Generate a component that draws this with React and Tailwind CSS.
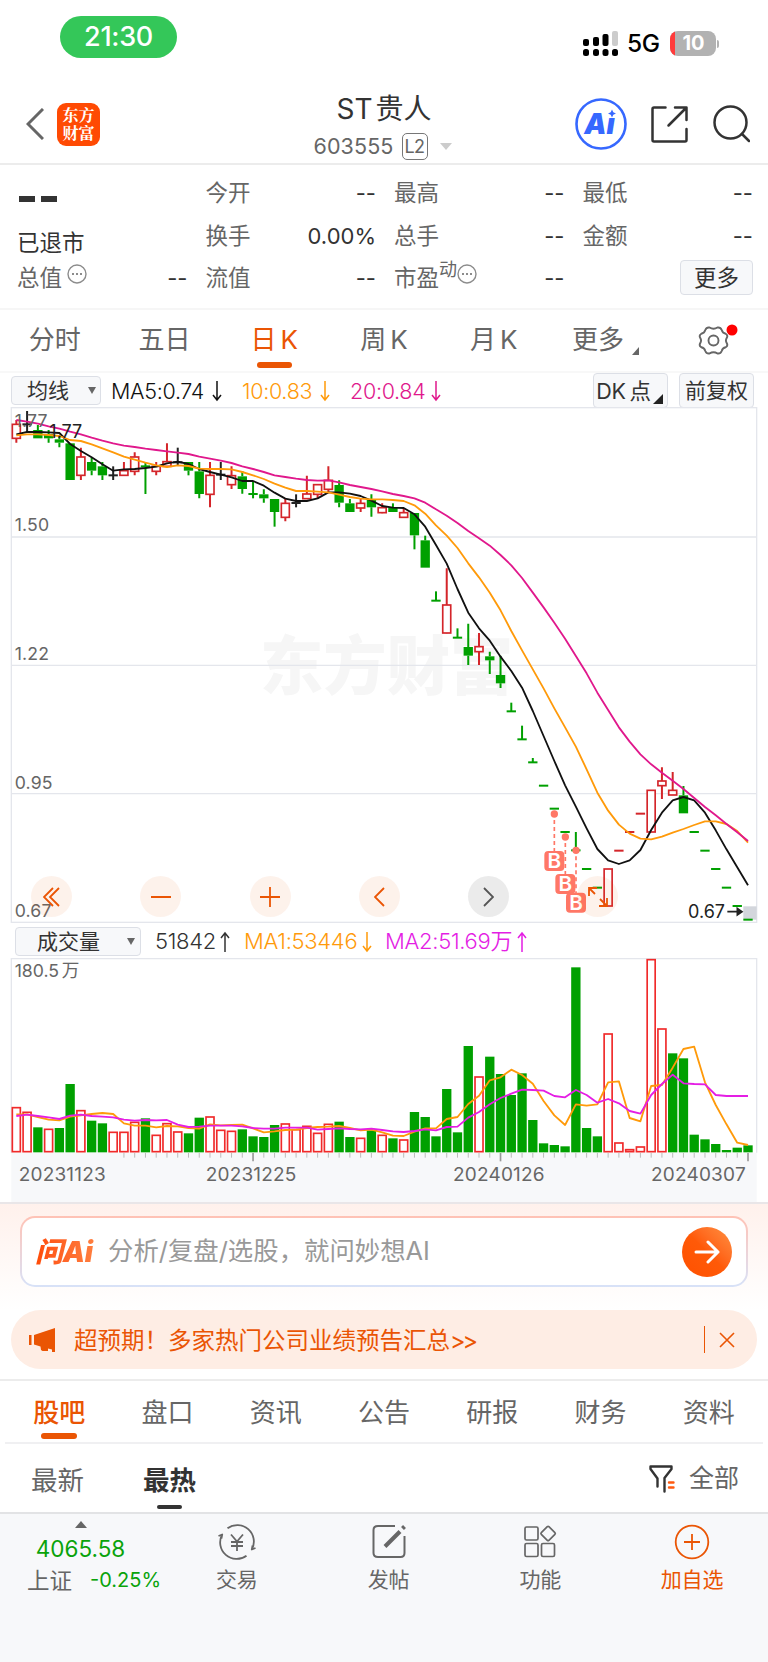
import React from "react";

// chart units are a third of a pixel, first value is the candle type:
// g = falling, r = rising, k = unchanged, then high, low, body top, body bottom
const candles = [
  ["r", 60, 128, 73, 115], ["k", 33, 97, 73, 73], ["g", 75, 115, 90, 115],
  ["g", 90, 128, 102, 115], ["g", 110, 142, 118, 128], ["g", 130, 240, 130, 240],
  ["r", 143, 240, 171, 226], ["g", 172, 226, 186, 212], ["g", 186, 240, 199, 226],
  ["k", 199, 240, 226, 226], ["r", 186, 228, 212, 226], ["r", 157, 226, 171, 214],
  ["g", 186, 282, 199, 199], ["r", 186, 226, 199, 214], ["r", 130, 200, 185, 199],
  ["k", 143, 195, 187, 187], ["g", 186, 226, 186, 212], ["g", 186, 295, 214, 282],
  ["r", 186, 322, 226, 283], ["k", 186, 240, 224, 224], ["r", 199, 267, 227, 254],
  ["g", 213, 281, 229, 267], ["g", 243, 295, 282, 282], ["g", 268, 308, 283, 295],
  ["g", 297, 380, 297, 336], ["r", 297, 364, 310, 352], ["k", 283, 322, 309, 309],
  ["r", 227, 297, 282, 296], ["r", 254, 295, 254, 283], ["r", 199, 280, 241, 268],
  ["g", 241, 322, 255, 308], ["g", 297, 336, 310, 336], ["r", 297, 336, 310, 324],
  ["g", 283, 350, 297, 322], ["r", 310, 340, 323, 338], ["g", 310, 336, 323, 336],
  ["r", 325, 354, 338, 352], ["g", 339, 448, 339, 406], ["g", 407, 503, 421, 503],
  ["g", 574, 602, 602, 602], ["r", 505, 700, 615, 699], ["g", 685, 713, 713, 713],
  ["g", 671, 795, 741, 767], ["r", 699, 795, 740, 755], ["g", 755, 822, 769, 781],
  ["g", 767, 864, 825, 850], ["g", 908, 934, 934, 934], ["g", 977, 1018, 1018, 1018],
  ["g", 1074, 1087, 1087, 1087], ["g", 1157, 1157, 1157, 1157], ["g", 1226, 1226, 1226, 1226],
  ["g", 1296, 1296, 1296, 1296], ["g", 1296, 1351, 1351, 1351], ["g", 1407, 1407, 1407, 1407],
  ["g", 1463, 1463, 1463, 1463], ["r", 1407, 1518, 1407, 1518], ["r", 1352, 1352, 1352, 1352],
  ["r", 1296, 1296, 1296, 1296], ["r", 1241, 1241, 1241, 1241], ["r", 1171, 1296, 1171, 1296],
  ["r", 1102, 1197, 1143, 1157], ["r", 1116, 1185, 1171, 1185], ["g", 1158, 1240, 1186, 1240],
  ["g", 1296, 1296, 1296, 1296], ["g", 1352, 1352, 1352, 1352], ["g", 1407, 1407, 1407, 1407],
  ["g", 1463, 1463, 1463, 1463], ["g", 1518, 1518, 1518, 1518], ["g", 1559, 1559, 1559, 1559],
];

const ma5 = [
  103, 96, 96, 97, 99, 132, 153, 172, 193, 212, 208, 207, 204, 200, 190, 185, 192, 207, 216, 224,
  232, 243, 243, 257, 278, 296, 303, 303, 295, 277, 277, 281, 288, 302, 318, 323, 324, 343, 380,
  435, 491, 567, 638, 685, 722, 770, 813, 863, 933, 1008, 1083, 1156, 1220, 1285, 1347, 1381,
  1392, 1381, 1350, 1290, 1238, 1201, 1191, 1201, 1238, 1291, 1348, 1402, 1456,
];
const ma10 = [
  106, 103, 103, 105, 108, 120, 123, 133, 145, 157, 170, 179, 188, 196, 201, 196, 198, 206, 207,
  207, 208, 216, 226, 237, 251, 263, 273, 273, 275, 277, 284, 291, 296, 298, 298, 300, 303, 316,
  341, 376, 407, 444, 490, 532, 578, 631, 693, 751, 808, 865, 925, 982, 1040, 1108, 1178, 1232,
  1274, 1301, 1316, 1318, 1310, 1298, 1287, 1275, 1264, 1264, 1272, 1293, 1328,
];
const ma20 = [
  60, 65, 71, 79, 86, 95, 103, 113, 122, 130, 137, 141, 146, 150, 154, 158, 162, 170, 176, 182,
  189, 199, 207, 216, 226, 231, 236, 240, 242, 241, 247, 255, 261, 267, 274, 282, 288, 295, 308,
  328, 347, 369, 393, 415, 437, 465, 496, 534, 578, 622, 668, 716, 768, 820, 878, 930, 982, 1025,
  1063, 1093, 1118, 1142, 1167, 1194, 1221, 1246, 1272, 1297, 1323,
];

const volumes = [
  563, 577, 622, 628, 624, 492, 572, 602, 610, 637, 637, 607, 595, 646, 611, 636, 640, 593, 591,
  631, 634, 628, 649, 651, 615, 612, 629, 619, 640, 613, 605, 651, 655, 631, 646, 655, 660, 576,
  591, 649, 507, 637, 378, 471, 410, 462, 525, 460, 600, 670, 675, 679, 142, 624, 649, 342, 669,
  689, 681, 119, 327, 400, 415, 644, 658, 672, 690, 683, 676,
];
const redVolumes = [
  0, 1, 3, 6, 9, 10, 11, 13, 14, 15, 18, 19, 20, 25, 26, 27, 28, 29, 32, 34, 36, 43, 55, 56, 57,
  58, 59, 60,
];
const volMa1 = [
  583, 583, 591, 599, 601, 590, 586, 582, 579, 582, 610, 617, 617, 622, 618, 619, 624, 626, 613,
  616, 615, 614, 625, 637, 634, 630, 629, 624, 621, 620, 618, 624, 631, 629, 637, 647, 648, 635,
  625, 625, 597, 591, 552, 527, 481, 472, 449, 465, 491, 543, 586, 615, 553, 557, 553, 487, 484,
  594, 604, 498, 495, 443, 387, 380, 487, 555, 613, 668, 675,
];
const volMa2 = [
  588, 584, 588, 592, 597, 587, 584, 588, 590, 592, 599, 602, 600, 601, 600, 614, 621, 620, 617,
  617, 617, 619, 624, 626, 626, 623, 623, 623, 629, 627, 625, 627, 628, 626, 630, 634, 636, 633,
  628, 631, 621, 620, 593, 576, 553, 534, 521, 509, 510, 512, 528, 532, 510, 525, 548, 537, 550,
  573, 581, 525, 492, 464, 490, 492, 493, 525, 528, 528, 528,
];

const colors = { r: "#d4252a", g: "#00a000", k: "#222222" };
const getX = (i) => 49 + i * 32.28;
const getPoints = (list) => list.map((y, i) => `${getX(i)},${y}`).join(" ");

const Candle = ({ data, x }) => {
  const [type, high, low, top, bottom] = data;
  const color = colors[type];
  if (top === bottom) {
    return (
      <g stroke={color} strokeWidth="6">
        {high !== low && <path d={`M${x} ${high}V${low}`} />}
        <path d={`M${x - 14} ${top}H${x + 14}`} />
      </g>
    );
  }
  return (
    <g stroke={color}>
      <path strokeWidth="6" d={`M${x} ${high}V${top}M${x} ${bottom}V${low}`} />
      {type === "g" ? (
        <rect x={x - 14} y={top} width="28" height={bottom - top} fill={color} stroke="none" />
      ) : (
        <rect x={x - 12} y={top} width="24" height={bottom - top} fill="#fff" strokeWidth="5" />
      )}
    </g>
  );
};

const BuyMark = ({ x, from, y }) => (
  <g>
    <circle cx={x} cy={from} r="11" fill="#ff7766" />
    <path d={`M${x} ${from + 18}V${y - 28}`} stroke="#ff7766" strokeWidth="5" strokeDasharray="12 9" />
    <rect x={x - 30} y={y - 30} width="60" height="60" rx="12" fill="#ff7766" />
    <text x={x} y={y + 22} textAnchor="middle" fontSize="62" fontWeight="600" fill="#fff">B</text>
  </g>
);

const Arrow = ({ up }) => (
  <svg className={`w-[10px] h-[22px] ${up ? "rotate-180" : ""}`} viewBox="0 0 10 22" fill="none" stroke="currentColor" strokeWidth="1.5">
    <path d="M5 1v19M1 15l4 5 4-5" />
  </svg>
);

const Dots = ({ className }) => (
  <svg className={`w-5 h-5 ${className}`} viewBox="0 0 20 20" fill="none" stroke="#8c8c8c" strokeWidth="1.4">
    <circle cx="10" cy="10" r="9" />
    <path d="M5 10h2M9 10h2M13 10h2" strokeWidth="2" />
  </svg>
);

const Stat = ({ label, value = "--", children }) => (
  <div className="flex items-center justify-between h-[42.5px] leading-[42px]">
    <div className="flex items-center text-[#666] text-[22.5px]">
      {label}
      {children}
    </div>
    <span className="text-[#333] text-[22px]">{value}</span>
  </div>
);

function StatusBar() {
  return (
    <div className="flex justify-between h-20 pl-[60px] pr-[49px]">
      <div className="mt-4 w-[117px] h-[42px] rounded-full bg-[#34c759] text-white text-[27px] leading-[42px] text-center font-medium tracking-[-0.3px]">
        21:30
      </div>
      <div className="flex items-center mt-[31px] h-[25px]">
        <svg className="w-9 h-[25px]" viewBox="0 0 36 25">
          <rect x="0" y="8" width="6" height="7" rx="2" />
          <rect x="10" y="6" width="6" height="9" rx="2" />
          <rect x="19.5" y="3" width="6" height="12" rx="2" />
          <rect x="29" y="0" width="6" height="15" rx="2" fill="#ccc" />
          <rect x="0" y="18" width="6" height="7" rx="2.5" />
          <rect x="10" y="18" width="6" height="7" rx="2.5" />
          <rect x="19.5" y="18" width="6" height="7" rx="2.5" />
          <rect x="29" y="18" width="6" height="7" rx="2.5" />
        </svg>
        <span className="ml-[8px] w-[35px] text-[24.5px] font-medium tracking-[-0.5px] text-black">5G</span>
        <div className="ml-2 w-[46px] h-[25px] rounded-lg bg-[#b2b2b2] overflow-hidden flex">
          <div className="w-[5px] bg-[#ff3b3b]"></div>
          <span className="flex-1 pr-1 text-center text-white text-[20px] leading-[25px] font-bold">10</span>
        </div>
        <div className="ml-[1px] w-[2px] h-2 rounded-r bg-[#b2b2b2]"></div>
      </div>
    </div>
  );
}

function Header() {
  return (
    <div className="flex h-[85px] border-b-2 border-[#ececec]">
      <div className="flex items-center w-[250px] pl-[26px] h-[88px]">
        <svg className="w-[18px] h-8" viewBox="0 0 18 32" fill="none" stroke="#666" strokeWidth="3">
          <path d="M17 1L2 16l15 15" />
        </svg>
        <div className="ml-[13px] w-[43px] h-[43px] rounded-[9px] bg-[#ff4a03] text-white text-[16px] leading-none font-bold flex flex-col items-center justify-center gap-[2px] font-['Noto_Serif_CJK_SC','Noto_Sans_CJK_SC',sans-serif]">
          <span>东方</span>
          <span>财富</span>
        </div>
      </div>
      <div className="flex-1 flex flex-col items-center">
        <div className="mt-3 h-[34px] leading-[34px] text-[28px] text-[#333]">
          ST<span className="ml-[3px]">贵人</span>
        </div>
        <div className="flex items-center h-[38px] pr-[3px] pt-[4px]">
          <span className="text-[21.5px] tracking-[0.1px] text-[#666]">603555</span>
          <span className="ml-2 w-[26px] h-[27px] rounded-[5px] border border-[#777] text-[#666] text-[18px] leading-[26px] text-center tracking-[-0.5px]">
            L2
          </span>
          <span className="ml-3 border-x-[6.5px] border-x-transparent border-t-[7px] border-t-[#ccc]"></span>
        </div>
      </div>
      <div className="flex items-center justify-end w-[250px] pr-[18px] h-[88px]">
        <svg className="w-[52px] h-[52px]" viewBox="0 0 52 52">
          <circle cx="26" cy="26" r="24.5" fill="none" stroke="#3668ff" strokeWidth="2.6" />
          <text x="24.5" y="36" textAnchor="middle" fontSize="28" fontWeight="900" fontStyle="italic" fill="#3668ff" className="font-[Inter,sans-serif]">
            Aı
          </text>
          <path d="M37 11.500l1.300 2.700L41 15.500l-2.700 1.300L37 19.500l-1.300-2.700L33 15.500l2.700-1.300z" fill="#3668ff" />
        </svg>
        <svg className="ml-6 w-[37px] h-[37px]" viewBox="0 0 37 37" fill="none" stroke="#333" strokeWidth="2.5" strokeLinecap="round" strokeLinejoin="round">
          <path d="M14.500 1.500H3Q1.500 1.500 1.500 3v31q0 1.500 1.500 1.500h31q1.500 0 1.500-1.500V23M24 1.500h11.500V14M35 2L17.500 19.500" />
        </svg>
        <svg className="ml-6 w-[38px] h-[38px]" viewBox="0 0 38 38" fill="none" stroke="#333" strokeWidth="2.5" strokeLinecap="round">
          <circle cx="18.5" cy="17.5" r="16" />
          <path d="M30 29l7 7" />
        </svg>
      </div>
    </div>
  );
}

function Quote() {
  return (
    <div className="grid grid-cols-4 gap-x-[18px] h-[145px] pl-[17px] pr-[15px] pt-[7px] border-b-2 border-[#f6f6f6]">
      <div>
        <div className="flex gap-[6px] h-[50px] pt-[24px]">
          <span className="ml-[2px] w-4 h-[6px] bg-[#333]"></span>
          <span className="w-4 h-[6px] bg-[#333]"></span>
        </div>
        <div className="h-[35px] leading-[41px] text-[22.5px] text-[#333]">已退市</div>
        <Stat label="总值">
          <Dots className="ml-[5px] mb-2" />
        </Stat>
      </div>
      <div>
        <Stat label="今开" />
        <Stat label="换手" value="0.00%" />
        <Stat label="流值" />
      </div>
      <div>
        <Stat label="最高" />
        <Stat label="总手" />
        <Stat label="市盈">
          <span className="text-[18px] mb-4 leading-[20px]">动</span>
          <Dots className="mb-2" />
        </Stat>
      </div>
      <div>
        <Stat label="最低" />
        <Stat label="金额" />
        <button className="block ml-auto mt-[3px] w-[73px] h-[35px] rounded border border-[#dcdfe6] bg-[#f7f8fa] text-[22.5px] leading-[33px] text-[#333]">
          更多
        </button>
      </div>
    </div>
  );
}

function PeriodTabs() {
  const tabs = ["分时", "五日", "日K", "周K", "月K"];
  return (
    <div className="grid grid-cols-7 h-[63px] border-b-2 border-[#f8f8f8] text-[26px] text-[#666] leading-[60px] text-center">
      {tabs.map((tab) => (
        <div key={tab} className={tab === "日K" ? "flex flex-col items-center text-[#ea5504]" : ""}>
          <div className="h-[52px]">
            {tab[0]}
            <span className={tab[1] === "K" ? "ml-1" : ""}>{tab[1]}</span>
          </div>
          {tab === "日K" && <span className="w-[35px] h-[6px] rounded-[3px] bg-[#ea5504]"></span>}
        </div>
      ))}
      <div className="flex justify-center pl-1">
        更多
        <span className="mt-[37px] ml-2 w-0 h-0 border-l-[7px] border-b-[8px] border-l-transparent border-b-[#666]"></span>
      </div>
      <div className="flex justify-center pt-[14px]">
        <svg className="w-[42px] h-[32px] ml-3" viewBox="0 0 42 32" fill="none" stroke="#666" strokeWidth="1.9" strokeLinejoin="round">
          <path d="M11.500 3.500Q15.500 6 19.500 3.500q3-.5 4.200 2.500.8 3 4 3.700 2.600 1.500 1 4.300-1.500 2.500 0 5 1.600 2.800-1 4.300-3.200.7-4 3.700-1.200 3-4.200 2.500-4-2.500-8 0-3 .5-4.200-2.500-.8-3-4-3.700-2.600-1.500-1-4.300 1.500-2.500 0-5-1.600-2.800 1-4.300 3.200-.7 4-3.700 1.200-3 4.200-2.500z" />
          <circle cx="15.5" cy="16.5" r="5" />
          <circle cx="34" cy="6" r="5.5" fill="#f00" stroke="none" />
        </svg>
      </div>
    </div>
  );
}

function PriceChart() {
  const round = "absolute top-[469px] w-[41px] h-[41px] rounded-full flex items-center justify-center";
  return (
    <div className="relative h-[516px]">
      <svg className="block w-[768px] h-[516px] font-[Inter,sans-serif]" viewBox="0 21 2304 1548" fill="none">
        <text x="780" y="868" fontSize="190" fontWeight="900" fill="#f6f6f6" className="font-['Noto_Sans_CJK_SC',sans-serif]">东方财富</text>
        <g stroke="#e4e6ec" strokeWidth="4">
          <path d="M34 411H2270M34 796H2270M34 1181H2270" />
          <rect x="34" y="23" width="2236" height="1544" />
        </g>
        <rect x="2230" y="1519" width="40" height="40" fill="#d3d6dc" />
        {candles.map((item, i) => (
          <Candle key={i} data={item} x={getX(i)} />
        ))}
        <g strokeWidth="5.5" strokeLinejoin="round">
          <polyline points={getPoints(ma5)} stroke="#111" />
          <polyline points={getPoints(ma10)} stroke="#ff9a0a" />
          <polyline points={getPoints(ma20)} stroke="#e0188c" />
        </g>
        <BuyMark x={1663} from={1242} y={1383} />
        <BuyMark x={1696} from={1311} y={1452} />
        <BuyMark x={1728} from={1351} y={1508} />
        <g fill="#666" fontSize="53" letterSpacing="0.5">
          <text x="44" y="81">1.77</text>
          <text x="44" y="393">1.50</text>
          <text x="44" y="780">1.22</text>
          <text x="44" y="1166">0.95</text>
          <text x="44" y="1551">0.67</text>
        </g>
        <text x="148" y="113" fontSize="54" fill="#222">1.77</text>
        <text x="2064" y="1554" fontSize="54" fill="#222">0.67</text>
        <path d="M2182 1535h40M2212 1525l14 10-14 10z" stroke="#222" strokeWidth="5" fill="#222" />
      </svg>
      <button className={`${round} left-[31px] bg-[#ea5504]/8`}>
        <svg className="w-[17px] h-5" viewBox="0 0 17 20" fill="none" stroke="#ea5504" strokeWidth="1.8">
          <path d="M10 1L1 10l9 9M16 1l-9 9 9 9" />
        </svg>
      </button>
      <button className={`${round} left-[140px] bg-[#ea5504]/8`}>
        <span className="w-5 h-[2px] bg-[#ea5504]"></span>
      </button>
      <button className={`${round} left-[249.5px] bg-[#ea5504]/8`}>
        <svg className="w-5 h-5" viewBox="0 0 20 20" stroke="#ea5504" strokeWidth="1.8">
          <path d="M10 0v20M0 10h20" />
        </svg>
      </button>
      <button className={`${round} left-[359px] bg-[#ea5504]/8`}>
        <svg className="w-[11px] h-5" viewBox="0 0 11 20" fill="none" stroke="#ea5504" strokeWidth="1.8">
          <path d="M10 1l-9 9 9 9" />
        </svg>
      </button>
      <button className={`${round} left-[468px] bg-[#e9e9e9]/90`}>
        <svg className="w-[11px] h-5" viewBox="0 0 11 20" fill="none" stroke="#555" strokeWidth="1.8">
          <path d="M1 1l9 9-9 9" />
        </svg>
      </button>
      <button className={`${round} left-[577px] bg-[#ea5504]/8`}>
        <svg className="w-5 h-5" viewBox="0 0 20 20" fill="none" stroke="#ea5504" strokeWidth="1.8">
          <path d="M1 9V1h8M1 1l6 6M12 12l7 7M19 11v8h-8" />
        </svg>
      </button>
    </div>
  );
}

function VolumeChart() {
  return (
    <svg className="block w-[768px] h-[244px] font-[Inter,sans-serif]" viewBox="0 114 2304 732" fill="none">
      <rect x="34" y="698" width="2236" height="150" fill="#f7f8fa" />
      <path d="M34 698V116H2270V698" stroke="#e4e6ec" strokeWidth="4" />
      {volumes.map((y, i) =>
        redVolumes.includes(i) ? (
          <rect key={i} x={getX(i) - 12} y={y} width="24" height={695 - y} stroke="#f02a2a" strokeWidth="5" />
        ) : (
          <rect key={i} x={getX(i) - 14} y={y} width="28" height={697 - y} fill="#00a000" />
        )
      )}
      <g strokeWidth="5.5" strokeLinejoin="round">
        <polyline points={getPoints(volMa1)} stroke="#ff9a0a" />
        <polyline points={getPoints(volMa2)} stroke="#e41ee4" />
      </g>
      {volumes.map((_, i) => {
        const isMajor = i === 22 || i === 45 || i === 68;
        return (
          i > 9 && (
            <path key={i} d={`M${getX(i)} 699V${isMajor ? 724 : 713}`} stroke={isMajor ? "#999" : "#bbb"} strokeWidth={isMajor ? 5 : 3} />
          )
        );
      })}
      <text x="44" y="170" fontSize="53" fill="#666" className="font-[Inter,'Noto_Sans_CJK_SC',sans-serif]">
        180.5<tspan dx="8">万</tspan>
      </text>
      <g fill="#666" fontSize="57" letterSpacing="0.6">
        <text x="56" y="782">20231123</text>
        <text x="617" y="782">20231225</text>
        <text x="1359" y="782">20240126</text>
        <text x="1953" y="782">20240307</text>
      </g>
    </svg>
  );
}

function AskBar() {
  return (
    <div className="h-[108px] pt-[12px] px-5 border-t-2 border-[#e9e6e8] bg-gradient-to-b from-[#fff1ec] to-white">
      <div className="rounded-[15px] p-[2px] bg-gradient-to-b from-[#ffc2b5] to-[#d7e2f8]">
        <div className="flex items-center h-[67px] rounded-[13px] bg-white pl-[13px] pr-[14px]">
          <span className="w-[62px] text-[28px] leading-[32px] font-black italic tracking-[-0.3px] bg-gradient-to-r from-[#ff4a03] to-[#ff8040] bg-clip-text text-transparent whitespace-nowrap">
            问Ai
          </span>
          <span className="ml-[11px] flex-1 text-[25.4px]">
            <span className="text-[#999]">分析/复盘/选股，就问妙想AI</span>
          </span>
          <button className="w-[50px] h-[50px] rounded-full bg-gradient-to-bl from-[#ff9040] via-[#ff5a08] to-[#ff5000] flex items-center justify-center">
            <svg className="w-[26px] h-[24px]" viewBox="0 0 26 24" fill="none" stroke="#fff" strokeWidth="3" strokeLinecap="round" strokeLinejoin="round">
              <path d="M2 12h22M14 2l10 10-10 10" />
            </svg>
          </button>
        </div>
      </div>
    </div>
  );
}

function Notice() {
  return (
    <div className="flex items-center mx-[11px] h-[59px] rounded-[30px] bg-[#feede4] text-[#ea5504]">
      <svg className="ml-[18px] w-[27px] h-6" viewBox="0 0 27 24" fill="currentColor">
        <path d="M0 7h2.500v10H0zM5 7L26 0v24h-3v-2.500l-4-1v2.500h-5.500l-1.500-1-.5-3.500L5 16.500z" />
      </svg>
      <span className="ml-[18px] mt-[2px] flex-1 text-[23.5px]">
        超预期！多家热门公司业绩预告汇总<span className="tracking-[-3px]">&gt;&gt;</span>
      </span>
      <span className="w-[1.5px] h-[27px] bg-[#ea5504]"></span>
      <svg className="ml-[14px] mr-[22px] w-4 h-4" viewBox="0 0 16 16" stroke="currentColor" strokeWidth="1.6">
        <path d="M1 1l14 14M15 1L1 15" />
      </svg>
    </div>
  );
}

function ContentTabs() {
  const tabs = ["股吧", "盘口", "资讯", "公告", "研报", "财务", "资料"];
  return (
    <>
      <div className="mt-[10px] border-t-2 border-[#ececec] px-[5px]">
        <div className="grid grid-cols-7 h-[63px] border-b-2 border-[#f0f0f2] text-[26px] leading-[63px] text-[#666] text-center">
          {tabs.map((tab, i) => (
            <div key={tab} className={i === 0 ? "flex flex-col items-center text-[#ea5504] font-medium" : ""}>
              <div className="h-[52px]">{tab}</div>
              {i === 0 && <span className="w-[36px] h-[6px] rounded-[3px] bg-[#ea5504]"></span>}
            </div>
          ))}
        </div>
      </div>
      <div className="flex h-[68px] pl-[31px] pr-[29px] text-[26.5px] leading-[73px] text-[#666]">
        <span>最新</span>
        <div className="ml-[59px] flex flex-col items-center font-bold text-[#333]">
          <div className="h-[61px]">最热</div>
          <span className="w-[25px] h-1 rounded-sm bg-[#333]"></span>
        </div>
        <div className="ml-auto flex items-center">
          <svg className="w-[26px] h-[28px] mt-[1px]" viewBox="0 0 26 28" fill="none" stroke="#333" strokeWidth="2.4" strokeLinecap="round" strokeLinejoin="round">
            <path d="M8.500 21.500v-8L1.500 4V1.500h21V4L15.500 13v13.500" />
            <path d="M20 17.500h4.500M20 22.500h4.500" stroke="#ff5a10" />
          </svg>
          <span className="ml-[14px] text-[25px]">全部</span>
        </div>
      </div>
    </>
  );
}

function BottomNav() {
  const item = "flex-1 flex flex-col items-center pt-[10px]";
  const icon = "w-[38px] h-[36px]";
  return (
    <div className="flex h-[151px] border-t-2 border-[#e2e3e5] bg-[#f7f8fa] text-[#666] text-[21px] leading-[40px]">
      <div className="w-[161px] flex flex-col items-center">
        <span className="mt-[7px] border-x-[6px] border-x-transparent border-b-[7px] border-b-[#666]"></span>
        <span className="mt-[6px] h-[29px] leading-[29px] text-[22.5px] text-[#0aa30a]">4065.58</span>
        <div className="self-start ml-[27px] flex leading-[35px] whitespace-nowrap">
          <span className="text-[22.5px]">上证</span>
          <span className="ml-[18px] text-[20px] text-[#0aa30a]">-0.25%</span>
        </div>
      </div>
      <div className={item}>
        <svg className={icon} viewBox="0 0 38 36" fill="none" stroke="#666" strokeWidth="1.8" strokeLinejoin="round">
          <path d="M9.500 4.300A16.500 16.500 0 0 1 33.800 25.500l3.700-1.500M28.500 31.700A16.500 16.500 0 0 1 4.200 10.500L.5 12M33.800 25.500l.8-4M4.200 10.500l-.8 4" />
          <path d="M13 10.500l6 7 6-7M19 17.500v9.500M13 18h12M13 22h12" />
        </svg>
        交易
      </div>
      <div className={item}>
        <svg className={icon} viewBox="0 0 38 36" fill="none" stroke="#666" strokeWidth="2">
          <path d="M25 2H8Q3.500 2 3.500 6v23q0 4 4.500 4h22.500q4 0 4-4V12" />
          <path d="M30 7.500L18.500 19 15 22.500" strokeWidth="4" />
          <path d="M32.500 4.500l2-2" strokeWidth="4" />
        </svg>
        发帖
      </div>
      <div className={item}>
        <svg className={icon} viewBox="0 0 38 36" fill="none" stroke="#666" strokeWidth="1.7">
          <rect x="4" y="3" width="13" height="13" rx="1.5" />
          <rect x="4" y="19.5" width="13" height="13" rx="1.5" />
          <rect x="20.5" y="19.5" width="13" height="13" rx="1.5" />
          <path d="M26.300 2.700l-6 6q-.8.800 0 1.600l6 6q.8.700 1.600 0l6-6q.8-.8 0-1.600l-6-6q-.8-.7-1.600 0z" />
        </svg>
        功能
      </div>
      <div className={`${item} text-[#ea5504]`}>
        <svg className={icon} viewBox="0 0 38 36" fill="none" stroke="currentColor" strokeWidth="1.8">
          <circle cx="19" cy="18" r="16.3" />
          <path d="M19 10v16M11 18h16" />
        </svg>
        加自选
      </div>
    </div>
  );
}

function App() {
  return (
    <div className="w-[768px] h-[1662px] overflow-hidden bg-white font-[Inter,'Noto_Sans_CJK_SC',sans-serif]">
      <StatusBar />
      <Header />
      <Quote />
      <PeriodTabs />
      <div className="flex h-[34px] pl-[11px] text-[21.5px] leading-[34px]">
        <button className="flex items-center justify-between mt-[3px] w-[90px] h-[29px] rounded border border-[#dcdfe6] bg-[#f7f8fa] pl-[15px] pr-[4px] text-[21px] text-[#333]">
          均线
          <span className="border-x-[4.5px] border-x-transparent border-t-[7px] border-t-[#666]"></span>
        </button>
        <div className="flex items-center ml-[10px] pt-[2px] w-[131px] font-[350] tracking-[-0.3px] text-[#111]">
          <span className="w-[101px]">MA5:0.74</span>
          <Arrow />
        </div>
        <div className="flex items-center pt-[2px] w-[108px] font-[350] tracking-[-0.3px] text-[#ff9a0a]">
          <span className="w-[78px]">10:0.83</span>
          <Arrow />
        </div>
        <div className="flex items-center pt-[2px] w-[110px] font-[350] tracking-[-0.3px] text-[#e0188c]">
          <span className="w-[81px]">20:0.84</span>
          <Arrow />
        </div>
        <button className="relative ml-auto w-[75px] h-[35px] rounded border border-[#dcdfe6] bg-[#f7f8fa] pr-[14px] text-[21.5px] leading-[35px] text-[#333] tracking-[-0.3px] whitespace-nowrap">
          DK<span className="ml-1">点</span>
          <span className="absolute right-1 bottom-[3px] border-l-[10px] border-b-[10px] border-l-transparent border-b-[#222]"></span>
        </button>
        <button className="ml-[11px] mr-[14px] w-[75px] h-[35px] rounded border border-[#dcdfe6] bg-[#f7f8fa] text-[21px] leading-[34px] text-[#333]">
          前复权
        </button>
      </div>
      <PriceChart />
      <div className="flex items-center h-[35px] pl-[15px] pt-[2px] text-[22px]">
        <button className="flex items-center justify-between w-[126px] h-[29px] rounded border border-[#dcdfe6] bg-[#f7f8fa] pl-[21px] pr-[5px] text-[21px] text-[#333]">
          成交量
          <span className="border-x-[4.5px] border-x-transparent border-t-[7px] border-t-[#666]"></span>
        </button>
        <div className="flex items-center ml-[14px] w-[89px] font-[350] tracking-[-0.3px] text-[#333]">
          <span className="w-[65px]">51842</span>
          <Arrow up />
        </div>
        <div className="flex items-center w-[141px] font-[350] tracking-[-0.3px] text-[#ff9a0a]">
          <span className="w-[118px]">MA1:53446</span>
          <Arrow />
        </div>
        <div className="flex items-center font-[350] tracking-[-0.3px] text-[#e41ee4]">
          <span className="w-[132px] whitespace-nowrap">MA2:51.69万</span>
          <Arrow up />
        </div>
      </div>
      <VolumeChart />
      <AskBar />
      <Notice />
      <ContentTabs />
      <BottomNav />
    </div>
  );
}

export default App;
